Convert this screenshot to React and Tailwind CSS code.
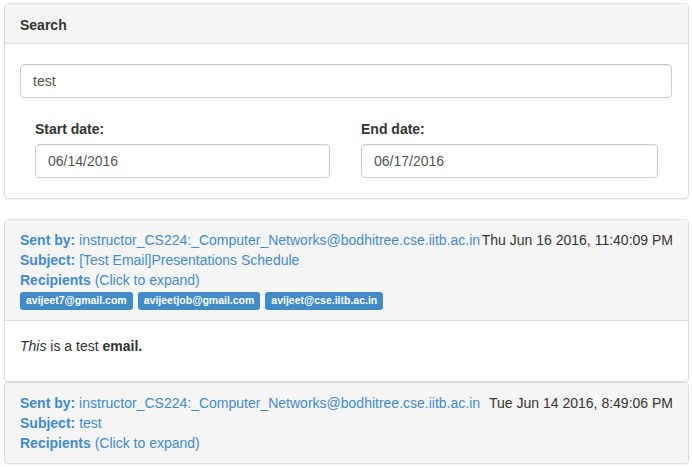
import React from "react";

const font = { fontFamily: '"Liberation Sans", Arial, sans-serif' };

function Label({ children }) {
  return (
    <span className="inline-block rounded-[3px] bg-[#428bca] px-[6px] pt-[3px] pb-[4px] text-[10.5px] font-bold leading-[11px] text-white whitespace-nowrap">
      {children}
    </span>
  );
}

function DateInput({ value }) {
  return (
    <div className="h-[34px] w-full rounded-[4px] border border-[#ccc] bg-white px-[12px] py-[6px] text-[14px] leading-[20px] text-[#555] shadow-[inset_0_1px_1px_rgba(0,0,0,0.075)]">
      {value}
    </div>
  );
}

function EmailHeader({ subject, date, labels }) {
  return (
    <div className="bg-[#f5f5f5] px-[15px] pt-[10px] pb-[10px] text-[14px] leading-[20px] text-[#428bca]">
      <div className="flex justify-between">
        <div className="whitespace-nowrap">
          <b>Sent by:</b> instructor_CS224:_Computer_Networks@bodhitree.cse.iitb.ac.in
        </div>
        <div className="whitespace-nowrap text-[#333]">{date}</div>
      </div>
      <div>
        <b>Subject:</b> {subject}
      </div>
      <div>
        <b>Recipients</b> (Click to expand)
      </div>
      {labels && (
        <div className="flex h-[20px] items-end gap-[5px]">
          {labels.map((l) => (
            <Label key={l}>{l}</Label>
          ))}
        </div>
      )}
    </div>
  );
}

export default function App() {
  return (
    <div className="min-h-[467px] w-[692px] bg-white pt-[3px] text-[#333]" style={font}>
      {/* Search panel */}
      <div className="ml-[4px] w-[685px] overflow-hidden rounded-[4px] border border-[#ddd] bg-white shadow-[0_1px_1px_rgba(0,0,0,0.05)]">
        <div className="border-b border-[#ddd] bg-[#f5f5f5] px-[15px] pt-[12px] pb-[8px] text-[14px] font-bold leading-[19px] text-[#333]">
          Search
        </div>
        <div className="pl-[15px] pr-[15px] pt-[20px] pb-[20px]">
          <div className="h-[34px] w-[652px] rounded-[4px] border border-[#ccc] bg-white px-[12px] py-[6px] text-[14px] leading-[20px] text-[#555] shadow-[inset_0_1px_1px_rgba(0,0,0,0.075)]">
            test
          </div>
          <div className="mt-[21px] flex">
            <div className="ml-[15px] w-[295px]">
              <div className="mb-[5px] text-[14px] font-bold leading-[20px]">Start date:</div>
              <DateInput value="06/14/2016" />
            </div>
            <div className="ml-[31px] w-[297px]">
              <div className="mb-[5px] text-[14px] font-bold leading-[20px]">End date:</div>
              <DateInput value="06/17/2016" />
            </div>
          </div>
        </div>
      </div>

      {/* Email 1 */}
      <div className="ml-[4px] mt-[20px] w-[685px] overflow-hidden rounded-[4px] border border-[#ddd] bg-white shadow-[0_1px_1px_rgba(0,0,0,0.05)]">
        <div className="border-b border-[#ddd]">
          <EmailHeader
            subject="[Test Email]Presentations Schedule"
            date="Thu Jun 16 2016, 11:40:09 PM"
            labels={["avijeet7@gmail.com", "avijeetjob@gmail.com", "avijeet@cse.iitb.ac.in"]}
          />
        </div>
        <div className="px-[15px] pt-[15px] pb-[25px] text-[14px] leading-[20px]">
          <i>This</i> is a test <b>email.</b>
        </div>
      </div>

      {/* Email 2 */}
      <div className="ml-[4px] w-[685px] overflow-hidden rounded-[4px] border border-[#ddd] bg-white shadow-[0_1px_1px_rgba(0,0,0,0.05)]">
        <EmailHeader subject="test" date="Tue Jun 14 2016, 8:49:06 PM" />
      </div>
    </div>
  );
}
